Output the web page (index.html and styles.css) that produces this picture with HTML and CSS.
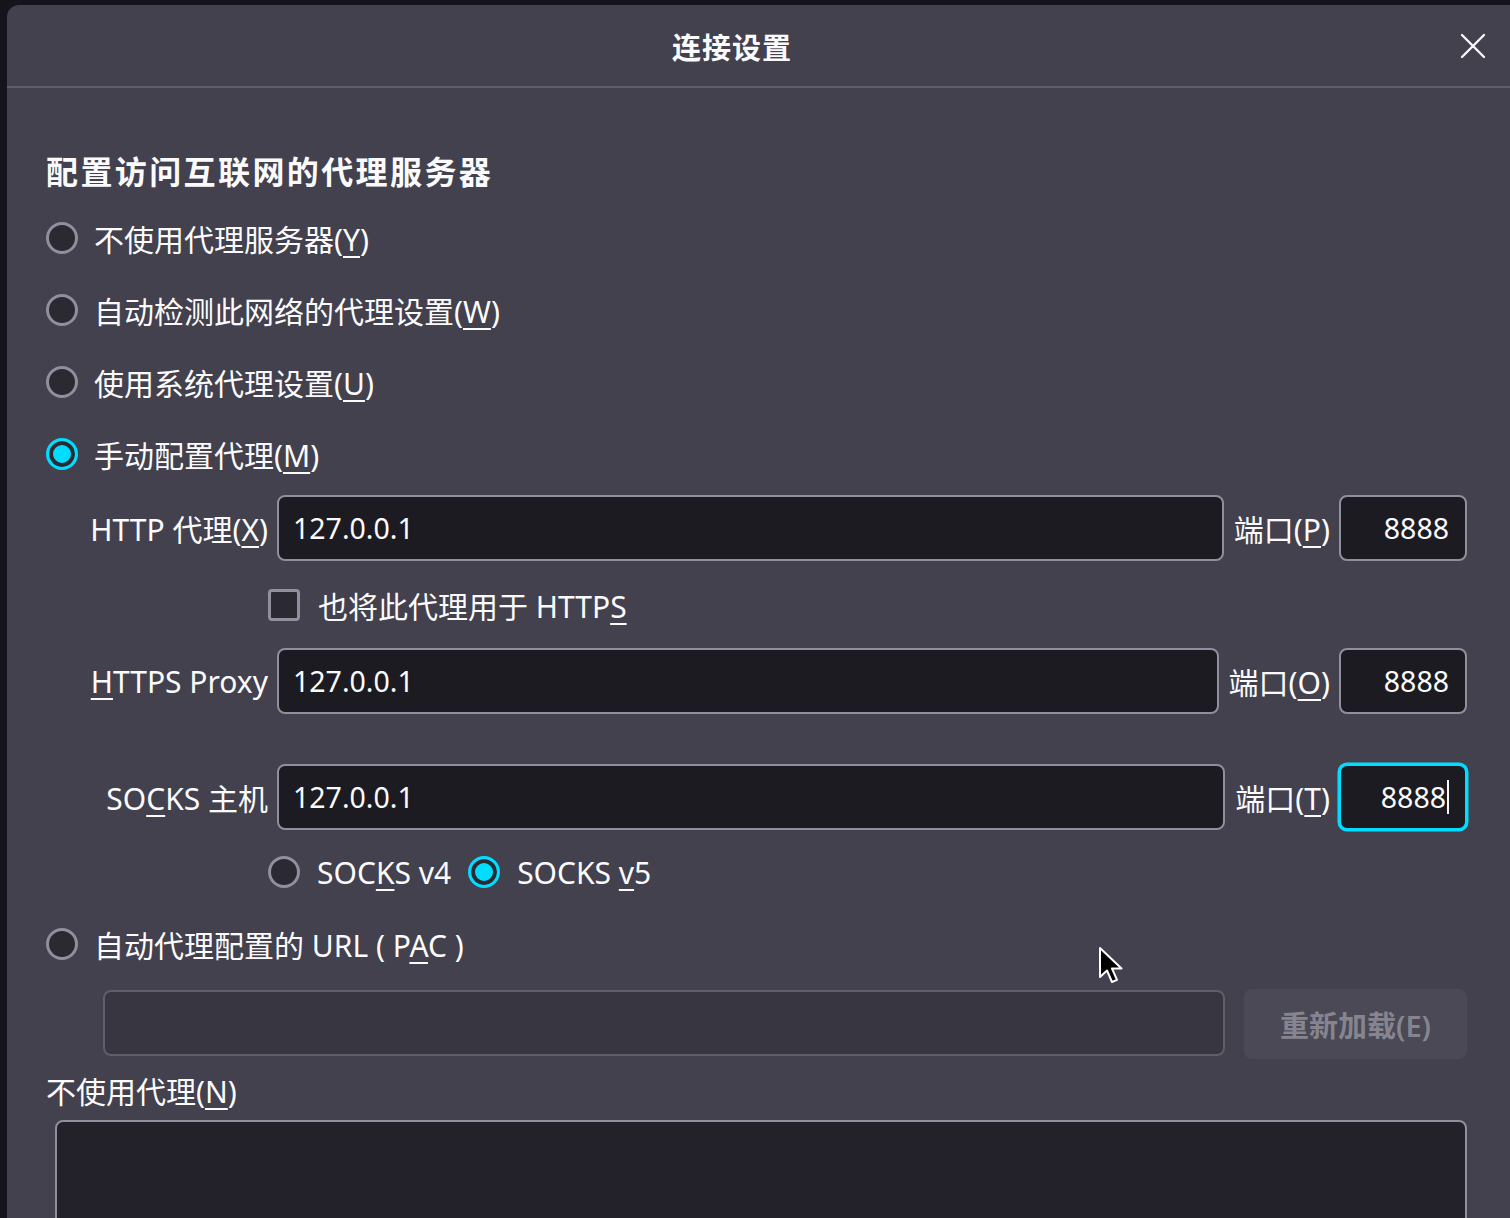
FILE: index.html
```html
<!DOCTYPE html>
<html lang="zh-CN">
<head>
    <meta charset="UTF-8">
    <meta name="viewport" content="width=device-width, initial-scale=1.0">
    <title>连接设置</title>
    <link rel="stylesheet" href="styles.css">
</head>
<body>
    <div class="dialog">
        <header class="dialog-header">
            <h2 class="dialog-title">连接设置</h2>
            <button class="close-btn" aria-label="关闭">
                <svg width="28" height="28" viewBox="0 0 28 28">
                    <path d="M3 3 L25 25 M25 3 L3 25" stroke="#fbfbfe" stroke-width="2.3" stroke-linecap="round" fill="none"/>
                </svg>
            </button>
        </header>

        <div class="dialog-body">
            <h3 class="section-title">配置访问互联网的代理服务器</h3>

            <div class="radio-row"><span class="radio"></span><span>不使用代理服务器(<u>Y</u>)</span></div>
            <div class="radio-row"><span class="radio"></span><span>自动检测此网络的代理设置(<u>W</u>)</span></div>
            <div class="radio-row"><span class="radio"></span><span>使用系统代理设置(<u>U</u>)</span></div>
            <div class="radio-row"><span class="radio checked"></span><span>手动配置代理(<u>M</u>)</span></div>

            <div class="proxy-row first">
                <span class="proxy-label">HTTP 代理(<u>X</u>)</span>
                <div class="field"><span class="value">127.0.0.1</span></div>
                <span class="port-label">端口(<u>P</u>)</span>
                <div class="field port"><span class="value">8888</span></div>
            </div>

            <div class="check-row">
                <span class="checkbox"></span><span>也将此代理用于 HTTP<u>S</u></span>
            </div>

            <div class="proxy-row">
                <span class="proxy-label"><u>H</u>TTPS Proxy</span>
                <div class="field"><span class="value">127.0.0.1</span></div>
                <span class="port-label">端口(<u>O</u>)</span>
                <div class="field port"><span class="value">8888</span></div>
            </div>

            <div class="proxy-row socks">
                <span class="proxy-label">SO<u>C</u>KS 主机</span>
                <div class="field"><span class="value">127.0.0.1</span></div>
                <span class="port-label">端口(<u>T</u>)</span>
                <div class="field port focused"><span class="value">8888</span><span class="caret"></span></div>
            </div>

            <div class="version-row">
                <span class="version"><span class="radio"></span><span>SOC<u>K</u>S v4</span></span>
                <span class="version"><span class="radio checked"></span><span>SOCKS <u>v</u>5</span></span>
            </div>

            <div class="radio-row pac"><span class="radio"></span><span>自动代理配置的 URL ( P<u>A</u>C )</span></div>

            <div class="pac-row">
                <div class="field disabled"></div>
                <button class="reload-btn" disabled>重新加载(E)</button>
            </div>

            <div class="plain-label">不使用代理(<u>N</u>)</div>
            <div class="textarea"></div>
        </div>
    </div>

    <svg class="cursor" width="30" height="42" viewBox="0 0 30 42">
        <path d="M2 2 L2 31 L9 24.5 L14 36 L19 33.8 L14 22.5 L23.5 22.5 Z" fill="#000" stroke="#fff" stroke-width="2" stroke-linejoin="round"/>
    </svg>
</body>
</html>
```

FILE: styles.css
```css
body {
    margin: 0;
    background-color: #15141a;
    font-family: "Noto Sans", "Noto Sans CJK SC", sans-serif;
    color: #fbfbfe;
    overflow: hidden;
    height: 100vh;
}

.dialog {
    margin: 5px 0 0 7px;
    height: calc(100vh - 5px);
    background-color: #42414d;
    border-top-left-radius: 12px;
    overflow: hidden;
}

.dialog-header {
    display: flex;
    align-items: center;
    height: 81px;
    padding: 0 17px 0 4px;
    border-bottom: 2px solid #5e5d69;
}

.dialog-title {
    flex: 1;
    margin: 0;
    text-align: center;
    font-size: 29px;
    font-weight: 600;
    letter-spacing: 1px;
}

.close-btn {
    width: 40px;
    height: 40px;
    padding: 0;
    border: none;
    background: transparent;
    display: flex;
    align-items: center;
    justify-content: center;
}

.dialog-body {
    padding: 0 43px 0 39px;
    font-size: 30px;
}

u {
    text-decoration-thickness: 2px;
    text-underline-offset: 5px;
}

.section-title {
    margin: 64px 0 10px;
    height: 40px;
    line-height: 40px;
    font-size: 32px;
    font-weight: 600;
    letter-spacing: 2.4px;
}

.radio-row {
    display: flex;
    align-items: center;
    gap: 16px;
    height: 72px;
}

.radio {
    flex: none;
    width: 32px;
    height: 32px;
    box-sizing: border-box;
    border: 3px solid #8f8f9d;
    border-radius: 50%;
    background-color: #2b2a33;
}

.radio.checked {
    border-color: #00ddff;
    background-color: #00ddff;
    box-shadow: inset 0 0 0 4px #2b2a33;
}

.proxy-row {
    display: flex;
    align-items: center;
    height: 66px;
}

.proxy-row.first {
    margin-top: 5px;
}

.proxy-row.socks {
    margin-top: 50px;
}

.proxy-label {
    flex: none;
    width: 222px;
    text-align: right;
    white-space: nowrap;
}

.field {
    flex: 1;
    display: flex;
    align-items: center;
    height: 66px;
    margin-left: 9px;
    padding: 0 14px;
    box-sizing: border-box;
    background-color: #1c1b22;
    border: 2px solid #8f8f9d;
    border-radius: 8px;
}

.value {
    font-size: 28.5px;
}

.port-label {
    flex: none;
    margin-left: 10px;
    white-space: nowrap;
}

.field.port {
    flex: none;
    width: 128px;
    justify-content: flex-end;
    padding-right: 16px;
}

.field.focused {
    border-color: #00ddff;
    box-shadow: 0 0 0 1.5px #00ddff;
}

.caret {
    width: 2px;
    height: 34px;
    margin-left: 1px;
    background-color: #fbfbfe;
}

.check-row {
    display: flex;
    align-items: center;
    gap: 18px;
    height: 87px;
    padding-left: 222px;
}

.checkbox {
    flex: none;
    width: 32px;
    height: 32px;
    box-sizing: border-box;
    border: 3px solid #8f8f9d;
    border-radius: 4px;
    background-color: #2b2a33;
}

.version-row {
    display: flex;
    align-items: center;
    gap: 17px;
    height: 84px;
    padding-left: 222px;
}

.version {
    display: flex;
    align-items: center;
    gap: 17px;
}

.radio-row.pac {
    height: 60px;
}

.pac-row {
    display: flex;
    align-items: flex-start;
    margin-top: 16px;
    padding-left: 57px;
}

.field.disabled {
    margin-left: 0;
    height: 66px;
    background-color: #383741;
    border-color: #5f5e69;
}

.reload-btn {
    flex: none;
    width: 223px;
    height: 70px;
    margin-left: 19px;
    margin-top: -1px;
    border: none;
    border-radius: 8px;
    background-color: #4a4955;
    color: #86858f;
    font-family: inherit;
    font-size: 29px;
    font-weight: 600;
}

.plain-label {
    margin-top: 13px;
    height: 40px;
    line-height: 40px;
}

.textarea {
    margin: 8px 0 0 9px;
    height: 200px;
    background-color: #23222b;
    border: 2px solid #8f8f9d;
    border-radius: 8px;
}

.cursor {
    position: absolute;
    left: 1098px;
    top: 946px;
}
```
